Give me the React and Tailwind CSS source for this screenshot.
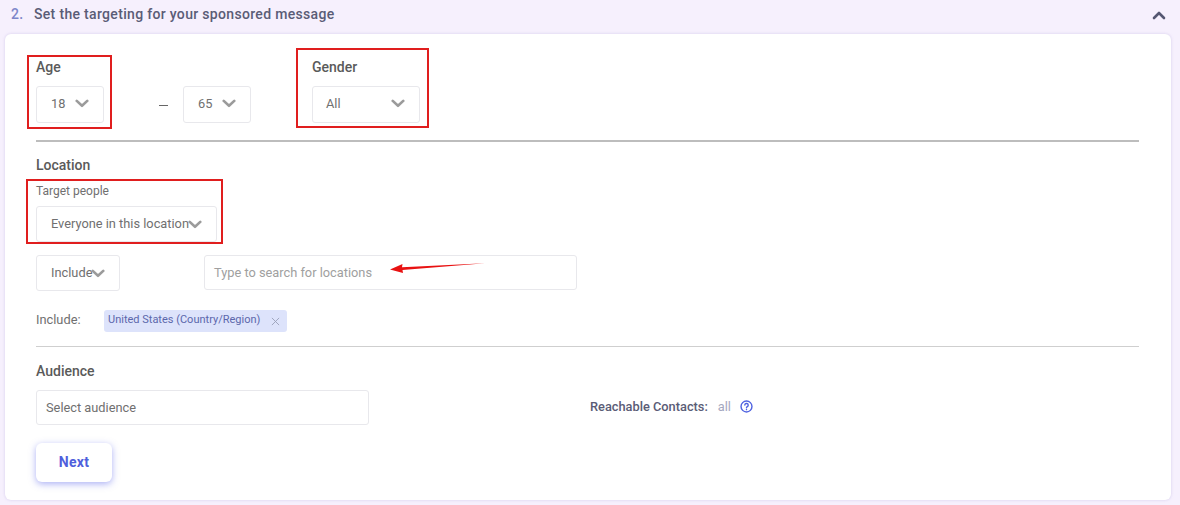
import React from "react";

const Chevron = ({ className = "" }) => (
  <svg viewBox="0 0 16 10" className={className} fill="none" stroke="#9b9b9b" strokeWidth="3" strokeLinecap="round" strokeLinejoin="round">
    <path d="M2 2l6 5.6 6-5.6" />
  </svg>
);

const Select = ({ w, h = "h-[37px]", pl = "pl-[14px]", pr = "", gap = "", pb = "", label, children }) => (
  <div className={`${w} ${h} ${pl} ${pr} ${gap} ${pb} flex items-center border border-[#e8e8ec] rounded-[3px] bg-white text-[12.8px] text-[#707070]`}>
    {label}
    {children}
  </div>
);

export default function App() {
  return (
    <div className="relative w-[1180px] h-[505px] overflow-hidden bg-[#f6f0fd] font-['Roboto',sans-serif] text-[#5a5a5a]">
      <div className="h-[34px] pl-[11px] pr-[13px] pb-[5px] flex items-center justify-between">
        <div className="flex items-center text-[14px] font-medium tracking-[0.32px]">
          <span className="text-[#7d86c9] w-[23px]">2.</span>
          <span className="text-[#5a5c76]">Set the targeting for your sponsored message</span>
        </div>
        <svg viewBox="0 0 14 10" className="w-[14px] h-[10px] mr-[1px]" fill="none" stroke="#555772" strokeWidth="2.6" strokeLinecap="round" strokeLinejoin="round">
          <path d="M2 8l5-5 5 5" />
        </svg>
      </div>

      <div className="ml-[5px] w-[1166px] h-[466px] bg-white rounded-[6px] pl-[31px] pr-[32px] shadow-[0_0_3px_rgba(170,160,215,0.45)]">
        <div className="relative pt-[25px] h-[108px] flex items-start border-b-2 border-[#bdbdbd]">
          <div className="w-[147px]">
            <div className="text-[14px] leading-[16px] font-medium mb-[11px]">Age</div>
            <Select w="w-[68px]" pl="pl-[14px]" gap="gap-[10px]" pb="pb-[2px]" label="18"><Chevron className="w-[14px] h-[9px]" /></Select>
          </div>
          <div className="w-[129px] flex">
            <div className="w-0 relative">
              <div className="absolute left-[-24px] top-[46px] w-[9px] h-px bg-[#666]"></div>
            </div>
            <div className="pt-[27px]">
              <Select w="w-[68px]" gap="gap-[10px]" pb="pb-[2px]" label="65"><Chevron className="w-[14px] h-[9px]" /></Select>
            </div>
          </div>
          <div>
            <div className="text-[14px] leading-[16px] font-medium mb-[11px]">Gender</div>
            <Select w="w-[108px]" pl="pl-[13px]" pr="pr-[14px]" pb="pb-[2px]" label={<span className="flex-1">All</span>}><Chevron className="w-[14px] h-[9px]" /></Select>
          </div>
        </div>

        <div className="pt-[15px] text-[14px] leading-[16px] font-medium">Location</div>
        <div className="mt-[11px] text-[12px] leading-[14px] text-[#707070]">Target people</div>
        <div className="mt-[8px]">
          <Select w="w-[181px]" h="h-[36px]" label="Everyone in this location"><Chevron className="w-[14px] h-[9px] -ml-px" /></Select>
        </div>
        <div className="mt-[13px] flex items-start gap-[84px]">
          <Select w="w-[84px]" h="h-[36px]" label="Include"><Chevron className="w-[14px] h-[9px] -ml-px" /></Select>
          <div className="w-[373px] h-[35px] pl-[9px] flex items-center border border-[#e8e8ec] rounded-[3px] text-[12.8px] text-[#a0a0a0]">Type to search for locations</div>
        </div>
        <div className="mt-[19px] flex items-center">
          <span className="w-[68px] pb-[2px] text-[12.8px] text-[#707070]">Include:</span>
          <div className="w-[183px] h-[22px] pl-[4px] pb-[2px] flex items-center rounded-[3px] bg-[#dde3fb] text-[11px] text-[#5c67ac]">
            <span>United States (Country/Region)</span>
            <svg viewBox="0 0 10 10" className="ml-[11px] mt-[2px] w-[9px] h-[9px]" fill="none" stroke="#9aa0b8" strokeWidth="1">
              <path d="M1 1l8 8M9 1l-8 8" />
            </svg>
          </div>
        </div>
        <div className="mt-[14px] border-b border-[#cfcfcf]"></div>

        <div className="mt-[16px] text-[14px] leading-[16px] font-medium">Audience</div>
        <div className="mt-[11px] flex items-center">
          <div className="w-[333px] h-[35px] pl-[9px] flex items-center border border-[#e8e8ec] rounded-[3px] text-[12.8px] text-[#707070]">Select audience</div>
          <div className="ml-[221px] pb-[2px] flex items-center text-[12.8px]">
            <span className="font-medium text-[#5a5c76]">Reachable Contacts:</span>
            <span className="ml-[10px] text-[#a5a7c0]">all</span>
            <svg viewBox="0 0 14 14" className="ml-[9px] w-[13px] h-[13px]" fill="none" stroke="#4f62e0" strokeWidth="1.5" strokeLinecap="round">
              <circle cx="7" cy="7" r="5.9" />
              <path d="M5.2 5.5a1.8 1.8 0 1 1 2.7 1.6c-.6.35-.9.7-.9 1.3" />
              <path d="M7 10.3v.1" />
            </svg>
          </div>
        </div>
        <button className="mt-[18px] block w-[76px] h-[39px] rounded-[6px] bg-white text-[14px] font-bold tracking-[0.3px] text-[#4f5fdc] shadow-[0_2px_7px_rgba(90,100,235,0.5)]">Next</button>
      </div>

      <div className="absolute left-[27px] top-[55px] w-[85px] h-[74px] border-2 border-[#e01e1e]"></div>
      <div className="absolute left-[296px] top-[48px] w-[133px] h-[80px] border-2 border-[#e01e1e]"></div>
      <div className="absolute left-[26px] top-[179px] w-[197px] h-[65px] border-2 border-[#e01e1e]"></div>
      <svg className="absolute left-[388px] top-[260px] w-[100px] h-[16px]" viewBox="0 0 100 16">
        <path d="M97 3.2L14 7.2 14.5 4 2 9.5l13 3.5-.5-3z" fill="#e81212" />
      </svg>
    </div>
  );
}
